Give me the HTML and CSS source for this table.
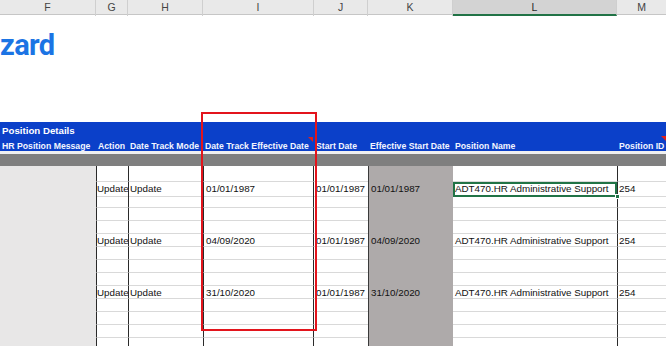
FILE: index.html
```html
<!DOCTYPE html>
<html>
<head>
<meta charset="utf-8">
<link rel="stylesheet" href="styles.css">
</head>
<body>
<div class="sheet">
  <div class="colhdr grid">
    <div class="ch">F</div>
    <div class="ch">G</div>
    <div class="ch">H</div>
    <div class="ch">I</div>
    <div class="ch">J</div>
    <div class="ch">K</div>
    <div class="ch sel">L</div>
    <div class="ch last">M</div>
  </div>

  <div class="title"><span class="title-text">zard</span></div>

  <div class="band">
    <div class="band-title">Position Details</div>
    <div class="band-row grid">
      <div class="bh">HR Position Message</div>
      <div class="bh">Action</div>
      <div class="bh">Date Track Mode</div>
      <div class="bh">Date Track Effective Date</div>
      <div class="bh">Start Date</div>
      <div class="bh">Effective Start Date</div>
      <div class="bh">Position Name</div>
      <div class="bh">Position ID</div>
    </div>
  </div>
  <div class="gap"></div>
  <div class="greyband"></div>

  <div class="data">
    <div class="row grid spacer">
      <div class="c f"></div><div class="c g"></div><div class="c h"></div><div class="c i"></div><div class="c j"></div><div class="c k"></div><div class="c l"></div><div class="c m"></div>
    </div>
    <div class="row grid">
      <div class="c f"></div><div class="c g">Update</div><div class="c h">Update</div><div class="c i">01/01/1987</div><div class="c j">01/01/1987</div><div class="c k">01/01/1987</div><div class="c l active">ADT470.HR Administrative Support<span class="handle"></span></div><div class="c m">254</div>
    </div>
    <div class="row grid"><div class="c f"></div><div class="c g"></div><div class="c h"></div><div class="c i"></div><div class="c j"></div><div class="c k"></div><div class="c l"></div><div class="c m"></div></div>
    <div class="row grid"><div class="c f"></div><div class="c g"></div><div class="c h"></div><div class="c i"></div><div class="c j"></div><div class="c k"></div><div class="c l"></div><div class="c m"></div></div>
    <div class="row grid"><div class="c f"></div><div class="c g"></div><div class="c h"></div><div class="c i"></div><div class="c j"></div><div class="c k"></div><div class="c l"></div><div class="c m"></div></div>
    <div class="row grid">
      <div class="c f"></div><div class="c g">Update</div><div class="c h">Update</div><div class="c i">04/09/2020</div><div class="c j">01/01/1987</div><div class="c k">04/09/2020</div><div class="c l">ADT470.HR Administrative Support</div><div class="c m">254</div>
    </div>
    <div class="row grid"><div class="c f"></div><div class="c g"></div><div class="c h"></div><div class="c i"></div><div class="c j"></div><div class="c k"></div><div class="c l"></div><div class="c m"></div></div>
    <div class="row grid"><div class="c f"></div><div class="c g"></div><div class="c h"></div><div class="c i"></div><div class="c j"></div><div class="c k"></div><div class="c l"></div><div class="c m"></div></div>
    <div class="row grid"><div class="c f"></div><div class="c g"></div><div class="c h"></div><div class="c i"></div><div class="c j"></div><div class="c k"></div><div class="c l"></div><div class="c m"></div></div>
    <div class="row grid">
      <div class="c f"></div><div class="c g">Update</div><div class="c h">Update</div><div class="c i">31/10/2020</div><div class="c j">01/01/1987</div><div class="c k">31/10/2020</div><div class="c l">ADT470.HR Administrative Support</div><div class="c m">254</div>
    </div>
    <div class="row grid"><div class="c f"></div><div class="c g"></div><div class="c h"></div><div class="c i"></div><div class="c j"></div><div class="c k"></div><div class="c l"></div><div class="c m"></div></div>
    <div class="row grid"><div class="c f"></div><div class="c g"></div><div class="c h"></div><div class="c i"></div><div class="c j"></div><div class="c k"></div><div class="c l"></div><div class="c m"></div></div>
    <div class="row grid"><div class="c f"></div><div class="c g"></div><div class="c h"></div><div class="c i"></div><div class="c j"></div><div class="c k"></div><div class="c l"></div><div class="c m"></div></div>
    <div class="row grid"><div class="c f"></div><div class="c g"></div><div class="c h"></div><div class="c i"></div><div class="c j"></div><div class="c k"></div><div class="c l"></div><div class="c m"></div></div>
  </div>

  <div class="comment comment-i"></div>
  <div class="comment comment-m"></div>
  <div class="highlight"></div>
</div>
</body>
</html>
```

FILE: styles.css
```css
html, body {
  margin: 0;
  padding: 0;
  background: #ffffff;
}
.sheet {
  position: relative;
  width: 666px;
  height: 346px;
  overflow: hidden;
  font-family: "Liberation Sans", Arial, sans-serif;
}
.grid {
  display: grid;
  grid-template-columns: 96px 32px 75px 111px 54px 85px 164px 49px;
}

/* Column letters bar */
.colhdr {
  height: 15px;
  background: #e9e9e9;
  border-bottom: 1px solid #c6c6c6;
  box-sizing: border-box;
}
.ch {
  box-sizing: border-box;
  border-right: 1px solid #cfcfcf;
  font-size: 10.5px;
  line-height: 14px;
  color: #444444;
  text-align: center;
}
.ch.sel {
  background: #d3d3d3;
  border-bottom: 2px solid #217346;
  color: #2b2b2b;
}
.ch.last {
  border-right: none;
}

/* Title */
.title {
  height: 107px;
  box-sizing: border-box;
  padding-top: 13px;
}
.title-text {
  display: block;
  font-family: Roboto, "Open Sans", sans-serif;
  font-weight: 700;
  font-size: 29px;
  line-height: 34px;
  color: #1b74e4;
  letter-spacing: -0.6px;
}

/* Blue band */
.band {
  height: 29px;
  background: #0b40c9;
  color: #ffffff;
  font-weight: 700;
}
.band-title {
  height: 15px;
  font-size: 9.7px;
  line-height: 17px;
  padding-left: 2px;
}
.band-row {
  height: 14px;
}
.bh {
  font-size: 8.7px;
  line-height: 14px;
  padding-top: 2px;
  padding-left: 2px;
  white-space: nowrap;
  overflow: hidden;
  color: #f2f5ff;
}
.gap {
  height: 3px;
  background: #f0f0f0;
}
.greyband {
  height: 12px;
  background: #7f7f7f;
}

/* Data rows */
.row {
  height: 13px;
}
.row.spacer {
  height: 16px;
}
.c {
  box-sizing: border-box;
  border-bottom: 1px solid #d9d9d9;
  font-size: 9.8px;
  line-height: 14px;
  padding-left: 2px;
  white-space: nowrap;
  overflow: hidden;
  color: #111111;
}
.c.f {
  background: #e8e7e7;
  border-bottom: none;
}
.c.g {
  border-left: 1px solid #2a2a2a;
  padding-left: 0;
}
.c.h {
  border-left: 1px solid #2a2a2a;
  padding-left: 1px;
}
.c.i {
  border-left: 1px solid #2a2a2a;
  border-right: 1px solid #2a2a2a;
  padding-left: 2px;
}
.c.j {
  padding-left: 2px;
}
.c.k {
  background: #aeaaaa;
  border-left: 1px solid #3a3a3a;
  border-bottom: none;
  padding-left: 2px;
}
.c.l {
  padding-left: 2px;
}
.c.m {
  border-left: 1px solid #2a2a2a;
  padding-left: 1px;
}
.c.active {
  position: relative;
  overflow: visible;
  outline: 2px solid #217346;
  outline-offset: -2px;
  padding-left: 2px;
}
.handle {
  position: absolute;
  right: -3px;
  bottom: -3px;
  width: 5px;
  height: 5px;
  background: #217346;
  border: 1px solid #ffffff;
  box-sizing: border-box;
}

/* Overlays */
.comment {
  position: absolute;
  width: 0;
  height: 0;
  border-top: 5px solid #e0201a;
  border-left: 5px solid transparent;
}
.comment-i {
  left: 308px;
  top: 137px;
}
.comment-m {
  left: 661px;
  top: 136px;
}
.highlight {
  position: absolute;
  left: 201px;
  top: 112px;
  width: 116px;
  height: 219px;
  box-sizing: border-box;
  border: 2px solid #e3141c;
}
```
